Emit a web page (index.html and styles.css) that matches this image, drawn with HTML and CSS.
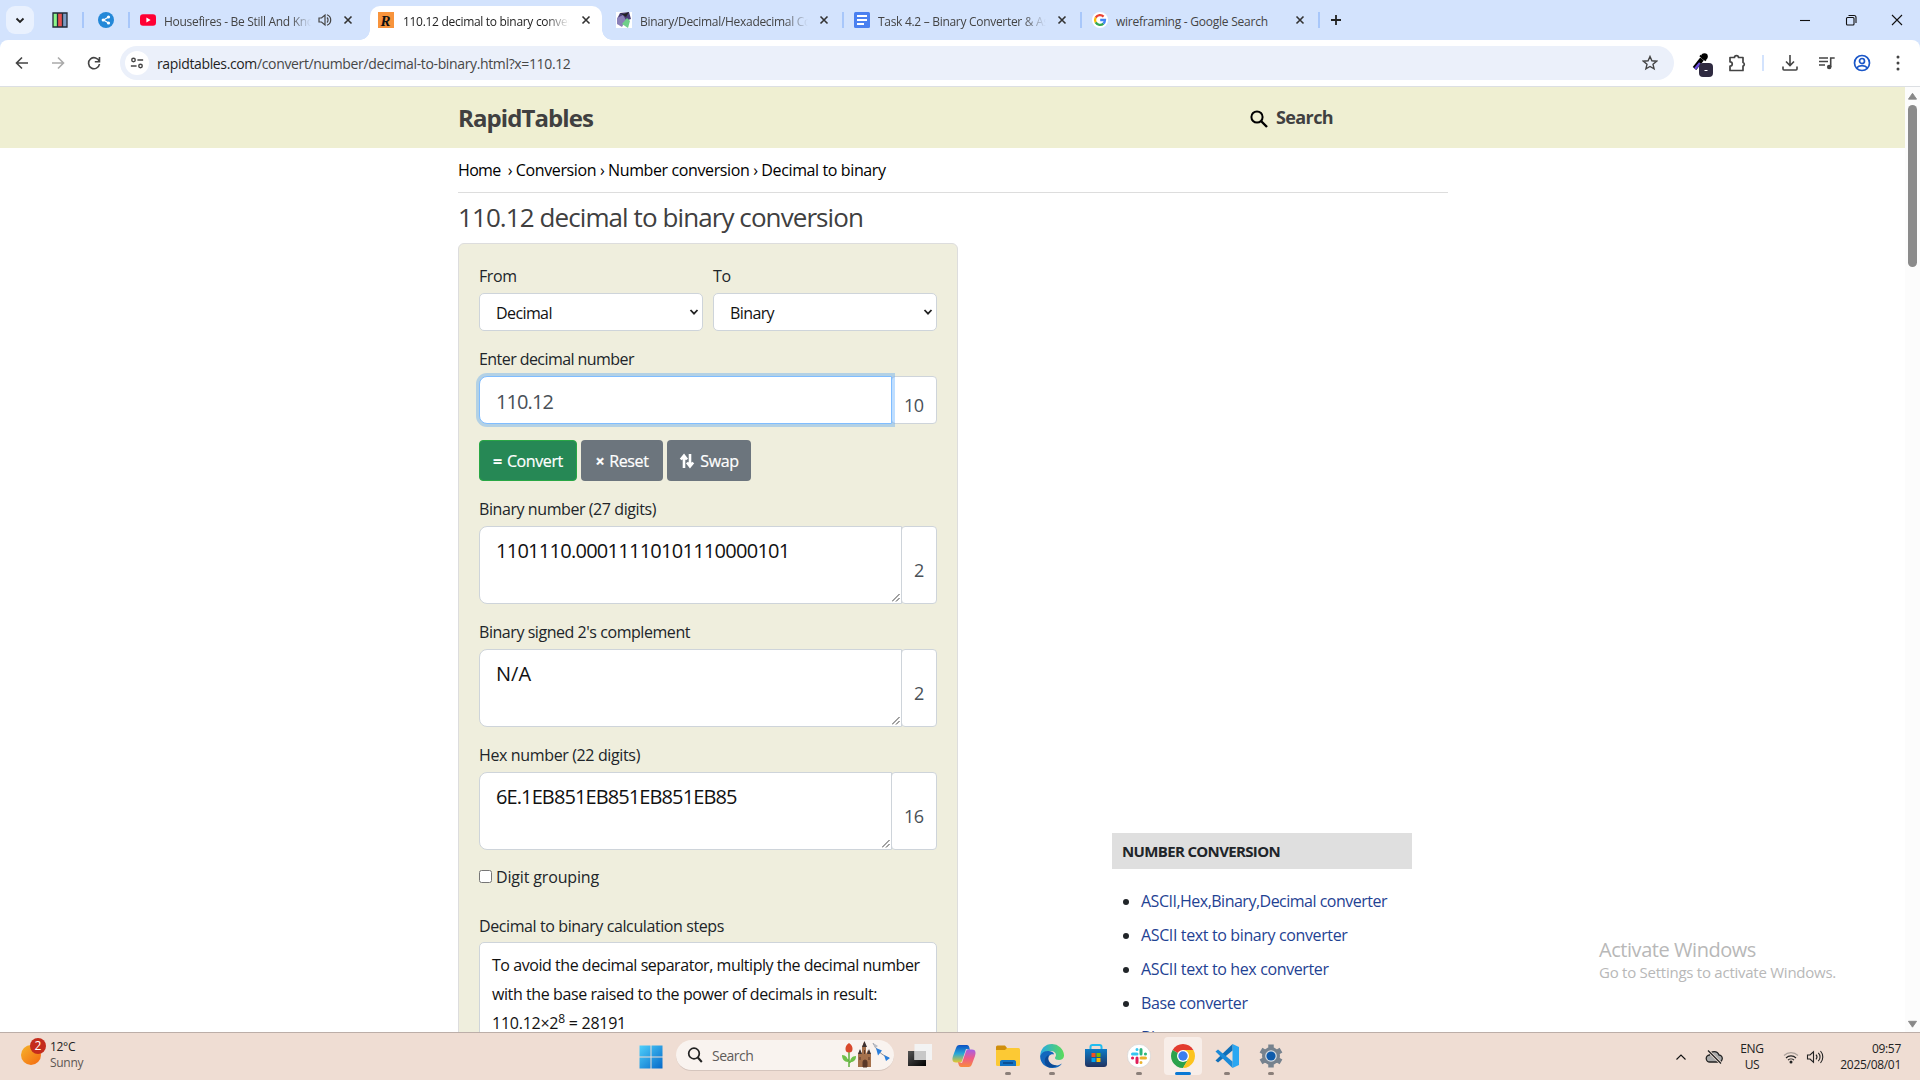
FILE: index.html
```html
<!DOCTYPE html>
<html lang="en">
<head>
<meta charset="utf-8">
<title>110.12 decimal to binary conversion</title>
<link rel="stylesheet" href="styles.css">
</head>
<body>
<div class="screen">
  <header class="tabstrip">
    <button class="tab-search"><svg viewBox="0 0 12 12" width="12" height="12"><path d="M2.500 4.500l3.500 3.500 3.500-3.500" class="s2"/></svg></button>
    <span class="pin pin-melon"><svg viewBox="0 0 16 16" width="16" height="16"><rect x="1" y="1" width="14" height="14" rx="1" fill="#e5524f"/><path d="M1 1h4.500v14H1z" fill="#8df58a"/><path d="M10.500 1H15v14h-4.500z" fill="#7d9cc4"/><path d="M1 1h14v14H1zM5.500 1v14M10.500 1v14" fill="none" stroke="#222b38" stroke-width="1.300"/></svg></span>
    <i class="sep sep-a"></i>
    <span class="pin pin-share"><svg viewBox="0 0 16 16" width="16" height="16"><circle cx="8" cy="8" r="8" fill="#2488d8"/><path d="M10.500 5L5.500 8l5 3" fill="none" stroke="#fff" stroke-width="1.200"/><circle cx="10.500" cy="5" r="1.600" fill="#fff"/><circle cx="5.200" cy="8" r="1.600" fill="#fff"/><circle cx="10.500" cy="11" r="1.600" fill="#fff"/></svg></span>
    <i class="sep sep-b"></i>
    <div class="tab tab-1">
      <svg viewBox="0 0 16 16" width="16" height="16"><rect y="2.300" width="16" height="11.400" rx="3" fill="#ff0033"/><path d="M6.400 5.500v5l4.200-2.500z" fill="#fff"/></svg>
      <span class="tab-title w147"><span class="t-a">Housefires - Be Still And Kno</span></span>
      <svg class="mute" viewBox="0 0 14 14" width="14" height="14"><path d="M1 5v4h2.500L7 12V2L3.500 5z" fill="none" stroke="#444" stroke-width="1.200"/><path d="M9 4.500a3.500 3.500 0 010 5M9 1.800a5.500 5.500 0 010 10.400" fill="none" stroke="#444" stroke-width="1.200"/></svg>
      <svg class="x" viewBox="0 0 10 10" width="10" height="10"><path d="M1.500 1.500l7 7M8.500 1.500l-7 7"/></svg>
    </div>
    <div class="tab tab-2 active">
      <svg viewBox="0 0 16 16" width="16" height="16"><rect width="16" height="16" fill="#f8943c"/><text x="2.500" y="13.500" class="r-logo">R</text></svg>
      <span class="tab-title w166"><span class="t-b">110.12 decimal to binary conver</span></span>
      <svg class="x" viewBox="0 0 10 10" width="10" height="10"><path d="M1.500 1.500l7 7M8.500 1.500l-7 7"/></svg>
    </div>
    <div class="tab tab-3">
      <svg viewBox="0 0 16 16" width="16" height="16"><rect width="16" height="16" fill="#fff"/><path d="M4 1l9-1 2 7-9 3-5-3z" fill="#4a3f78"/><path d="M1 6l6-3 3 5-4 7-5-3z" fill="#8b80b8"/><path d="M6 12l5-6 3 3-2 7z" fill="#6fcf8a"/><path d="M4 1l4 1 5-2-3 5z" fill="#222"/></svg>
      <span class="tab-title w168"><span class="t-c">Binary/Decimal/Hexadecimal Co</span></span>
      <svg class="x" viewBox="0 0 10 10" width="10" height="10"><path d="M1.500 1.500l7 7M8.500 1.500l-7 7"/></svg>
    </div>
    <i class="sep sep-c"></i>
    <div class="tab tab-4">
      <svg viewBox="0 0 16 16" width="16" height="16"><rect width="16" height="16" rx="1.500" fill="#4a80f0"/><path d="M3 4h10M3 8h10M3 12h7" stroke="#fff" stroke-width="1.800"/></svg>
      <span class="tab-title w168"><span class="t-d">Task 4.2 – Binary Converter &amp; As</span></span>
      <svg class="x" viewBox="0 0 10 10" width="10" height="10"><path d="M1.500 1.500l7 7M8.500 1.500l-7 7"/></svg>
    </div>
    <i class="sep sep-c"></i>
    <div class="tab tab-5">
      <svg viewBox="0 0 16 16" width="16" height="16"><circle cx="8" cy="8" r="8" fill="#fff"/><g fill="none" stroke-width="2.300"><path d="M11.600 4.600A5 5 0 003.700 5.600" stroke="#ea4335"/><path d="M3.700 5.500a5 5 0 000 5" stroke="#fbbc05"/><path d="M3.700 10.400a5 5 0 007.700 1.200" stroke="#34a853"/><path d="M11.300 11.700A5 5 0 0013 8H8.200" stroke="#4285f4"/></g></svg>
      <span class="tab-title w168 nofade"><span class="t-e">wireframing - Google Search</span></span>
      <svg class="x" viewBox="0 0 10 10" width="10" height="10"><path d="M1.500 1.500l7 7M8.500 1.500l-7 7"/></svg>
    </div>
    <i class="sep sep-c"></i>
    <svg class="plus" viewBox="0 0 12 12" width="12" height="12"><path d="M6 1v10M1 6h10" class="s2"/></svg>
    <div class="winctl">
      <svg viewBox="0 0 12 12" width="12" height="12"><path d="M1 6.500h10" class="s1"/></svg>
      <svg viewBox="0 0 12 12" width="12" height="12"><rect x="1.500" y="3.500" width="7.500" height="7.500" rx="1" class="s1"/><path d="M3.500 1.500h5.500a2 2 0 012 2V9" class="s1"/></svg>
      <svg viewBox="0 0 12 12" width="12" height="12"><path d="M1 1l10 10M11 1L1 11" class="s1"/></svg>
    </div>
  </header>

  <div class="toolbar">
    <div class="nav">
      <svg viewBox="0 0 16 16" width="16" height="16"><path d="M14 8H3M8 2.500L2.500 8 8 13.500" class="s3"/></svg>
      <svg class="dim" viewBox="0 0 16 16" width="16" height="16"><path d="M2 8h11M8 2.500L13.500 8 8 13.500" class="s3"/></svg>
      <svg viewBox="0 0 16 16" width="16" height="16"><path d="M13.300 6.500A5.500 5.500 0 1013.500 9M13.500 2v4.700H8.800" class="s3"/></svg>
    </div>
    <div class="omnibox">
      <span class="site-info"><svg viewBox="0 0 16 16" width="14" height="14"><circle cx="4" cy="4.500" r="2" class="s3"/><path d="M8.500 4.500H15M1 11.500h6.500" class="s3"/><circle cx="12" cy="11.500" r="2" class="s3"/></svg></span>
      <span class="url">rapidtables.com<span class="path">/convert/number/decimal-to-binary.html?x=110.12</span></span>
      <svg class="star" viewBox="0 0 16 16" width="16" height="16"><path d="M8 1.500l1.900 4.300 4.700.4-3.600 3.100 1.100 4.600L8 11.500l-4.100 2.400L5 9.300 1.400 6.200l4.700-.4z"/></svg>
    </div>
    <div class="ext">
      <svg viewBox="0 0 24 24" width="24" height="24"><path d="M4.500 15.500L12 6" stroke="#000" stroke-width="4.500"/><path d="M5 16l5-6" stroke="#6a4be0" stroke-width="2.500"/><path d="M10 2.500l6 5" stroke="#000" stroke-width="2"/><circle cx="14.500" cy="3.500" r="3.300"/><rect x="9" y="10" width="14" height="14" rx="4" fill="#2f2a40"/><path d="M14.500 17.500h3" stroke="#fff"/></svg>
      <svg viewBox="0 0 20 20" width="20" height="20"><path d="M3 4.500h4.500a2 1.800 0 014 0h4.500v5a1.900 1.900 0 010 3.600v4.400H3v-4.300c3 0 3-4.400 0-4.400z" fill="none" stroke="#444" stroke-width="1.700" stroke-linejoin="round"/></svg>
      <i></i>
      <svg viewBox="0 0 18 18" width="18" height="18"><path d="M9 1v10M5 7.500l4 4 4-4M2 12.500V15a1 1 0 001 1h12a1 1 0 001-1v-2.500" class="s3"/></svg>
      <svg viewBox="0 0 18 18" width="18" height="18"><path d="M1 4h9M1 7.500h9M1 11h6M12.700 13V4h4" class="s3"/><circle cx="11.200" cy="13" r="2.300" fill="#444"/></svg>
      <svg viewBox="0 0 18 18" width="18" height="18"><g fill="none" stroke="#1a56c8" stroke-width="1.700"><circle cx="9" cy="9" r="7.500"/><circle cx="9" cy="7" r="2.500"/><path d="M3.500 14c2.500-3.200 8.500-3.200 11 0"/></g></svg>
      <svg viewBox="0 0 4 18" width="4" height="18"><g fill="#444"><circle cx="2" cy="3" r="1.500"/><circle cx="2" cy="9" r="1.500"/><circle cx="2" cy="15" r="1.500"/></g></svg>
    </div>
  </div>

  <div class="viewport">
    <div class="page">
      <div class="site-header"><div class="wrap head-row">
        <span class="brand">RapidTables</span>
        <span class="site-search"><svg viewBox="0 0 18 18" width="18" height="18"><circle cx="7" cy="7" r="5.600" fill="none" stroke="#000" stroke-width="2"/><path d="M11 11l6 6" stroke="#000" stroke-width="2.400"/></svg><span class="ss">Search</span></span>
      </div></div>
      <div class="wrap">
        <nav class="crumbs"><span class="c1">Home</span><span class="c2">› Conversion › Number conversion › Decimal to binary</span></nav>
        <div class="cols">
          <main>
            <h1><span class="h1t">110.12 decimal to binary conversion</span></h1>
            <form class="calc">
              <div class="pair">
                <div><label>From</label><div class="select"><span class="sd">Decimal</span><svg viewBox="0 0 10 10" width="10" height="10"><path d="M1.500 3l3.500 3.700L8.500 3" class="s2"/></svg></div></div>
                <div><label>To</label><div class="select"><span class="sb">Binary</span><svg viewBox="0 0 10 10" width="10" height="10"><path d="M1.500 3l3.500 3.700L8.500 3" class="s2"/></svg></div></div>
              </div>
              <label><span class="l1">Enter decimal number</span></label>
              <div class="group entry"><div class="field focus"><span class="val v0">110.12</span></div><div class="addon wide">10</div></div>
              <div class="buttons">
                <span class="btn go"><b>=</b> <span class="bt">Convert</span></span><span class="btn b2"><b>×</b> <span>Reset</span></span><span class="btn b3"><svg viewBox="0 0 16 16" width="16" height="16"><path d="M5 15V4M1.800 6.500L5 2.500l3 4M11 1v11M8 9.500l3 4 3.200-4" fill="none" stroke="#fff" stroke-width="2.600"/></svg> <span>Swap</span></span>
              </div>
              <label><span class="l2">Binary number (27 digits)</span></label>
              <div class="group area"><div class="field"><span class="val v1">1101110.00011110101110000101</span><svg class="grip" viewBox="0 0 8 8" width="8" height="8"><path d="M0 7.500L7.500 0M4 7.500L7.500 4"/></svg></div><div class="addon">2</div></div>
              <label><span class="l3">Binary signed 2's complement</span></label>
              <div class="group area"><div class="field"><span class="val v2">N/A</span><svg class="grip" viewBox="0 0 8 8" width="8" height="8"><path d="M0 7.500L7.500 0M4 7.500L7.500 4"/></svg></div><div class="addon">2</div></div>
              <label><span class="l4">Hex number (22 digits)</span></label>
              <div class="group area"><div class="field"><span class="val v3">6E.1EB851EB851EB851EB85</span><svg class="grip" viewBox="0 0 8 8" width="8" height="8"><path d="M0 7.500L7.500 0M4 7.500L7.500 4"/></svg></div><div class="addon wide">16</div></div>
              <div class="check"><i></i><span class="l5">Digit grouping</span></div>
              <label class="steps-label"><span class="l6">Decimal to binary calculation steps</span></label>
              <div class="steps"><span class="p1">To avoid the decimal separator, multiply the decimal number</span><br><span class="p2">with the base raised to the power of decimals in result:</span><br><span class="p3">110.12×2<sup>8</sup> = 28191</span></div>
            </form>
          </main>
          <aside>
            <h2><span class="h2t">NUMBER CONVERSION</span></h2>
            <ul>
              <li><a class="a1">ASCII,Hex,Binary,Decimal converter</a></li>
              <li><a class="a2">ASCII text to binary converter</a></li>
              <li><a class="a3">ASCII text to hex converter</a></li>
              <li><a class="a4">Base converter</a></li>
              <li><a class="a4">Binary converter</a></li>
            </ul>
          </aside>
        </div>
      </div>
    </div>
    <div class="scrollbar">
      <svg viewBox="0 0 10 8" width="9" height="8"><path d="M5 1L9.500 7.500H.5z" fill="#888" stroke="#888" stroke-linejoin="round"/></svg>
      <i></i>
      <svg class="down" viewBox="0 0 10 8" width="9" height="8"><path d="M5 7.500L.5 1h9z" fill="#888" stroke="#888" stroke-linejoin="round"/></svg>
    </div>
    <div class="watermark"><span class="wm1">Activate Windows</span><span class="wm2">Go to Settings to activate Windows.</span></div>
  </div>

  <footer class="taskbar">
    <div class="weather">
      <svg viewBox="0 0 30 32" width="30" height="32"><defs><linearGradient id="sun" x1="0" y1="0" x2="1" y2="1"><stop offset="0" stop-color="#f5b52c"/><stop offset="1" stop-color="#f4670f"/></linearGradient></defs><circle cx="11" cy="19" r="10" fill="url(#sun)"/><circle cx="18" cy="10" r="8" fill="#c42b1c"/><text x="18" y="14.300" class="badge">2</text></svg>
      <div><span class="k">12°C</span><span class="k soft">Sunny</span></div>
    </div>
    <div class="apps">
      <svg class="win" viewBox="0 0 24 24" width="24" height="24"><defs><linearGradient id="w" x1="0" y1="0" x2="1" y2="1"><stop offset="0" stop-color="#4fd0fb"/><stop offset="1" stop-color="#0669c9"/></linearGradient></defs><path fill="url(#w)" d="M.5.500h11v11H.5zM12.500.500h11v11h-11zM.5 12.500h11v11H.5zM12.500 12.500h11v11h-11z"/></svg>
      <div class="search">
        <svg viewBox="0 0 16 16" width="16" height="16"><circle cx="7" cy="6.500" r="5.300" fill="none" stroke="#222" stroke-width="1.700"/><path d="M10.800 10.500l4 4.500" stroke="#222" stroke-width="2"/></svg>
        <span class="stext">Search</span>
        <svg class="art" viewBox="0 0 50 28" width="50" height="28"><path d="M8 10v16M8 20l-5-3M8 22l5-4" stroke="#5fae3c" stroke-width="1.500"/><path d="M1 14c4 0 6 3 6 7-4 0-6-3-6-7zM15 15c-4 0-6 3-6 6 4 0 6-2 6-6z" fill="#6fc04a"/><path d="M8 2c3 2 3.500 4 3.500 6A3.500 3.500 0 018 11.500 3.500 3.500 0 014.500 8C4.500 6 5 4 8 2z" fill="#d8492c"/><path d="M17 26V13l2-4 2 4V6l2-5 2 5v7l2-4 3 4v13z" fill="#a5714c"/><path d="M17 13l2-5 2 5zM21 6l2.500-6L26 6zM26 13l2-5 2 5z" fill="#3d3232"/><path d="M22 26v-5a2 2 0 014 0v5zM19 16v3M28 16v3M23.500 9v4" fill="#5a3828" stroke="#5a3828"/><path d="M32 2c4 8 9 12 16 15" fill="none" stroke="#8b8f98"/><path d="M32 2l5 3-3 2z" fill="#b8bcc4"/><path d="M35 7l6 2.500-4 5zM43 14l6 3-4 3z" fill="#2a7fdc"/></svg>
      </div>
      <span class="app"><svg viewBox="0 0 24 24" width="24" height="24"><defs><linearGradient id="tv" x1="0" y1="0" x2="1" y2="1"><stop offset="0" stop-color="#555"/><stop offset="1" stop-color="#000"/></linearGradient></defs><path fill="url(#tv)" d="M0 7h18v15H0z"/><path fill="#f3f3f3" d="M6.500 0H24v16H6.500z"/><path fill="#c8c8c8" d="M6.500 7H18v9H6.500z"/></svg></span>
      <span class="app"><svg viewBox="0 0 24 24" width="24" height="24"><defs><linearGradient id="ca" x1="0" y1="0" x2="0" y2="1"><stop offset="0" stop-color="#0b50c4"/><stop offset=".5" stop-color="#28a8d8"/><stop offset="1" stop-color="#e8c82a"/></linearGradient><linearGradient id="cb" x1="0" y1="0" x2="0" y2="1"><stop offset="0" stop-color="#a45ee8"/><stop offset=".5" stop-color="#ee5b88"/><stop offset="1" stop-color="#f98a3c"/></linearGradient></defs><path fill="url(#ca)" d="M7.500 1H15c2 0 2.500 3 3 5l-4-1-4 12c-.5 1-1.500 1.500-2.500 1.500H4C0 18.500 0 15 1 12L4 4c.7-2 1.500-3 3.500-3z"/><path fill="url(#cb)" d="M16.500 23H9c-2 0-2.500-3-3-5l4 1L14 7c.5-1 1.500-1.500 2.500-1.500H20c4 0 4 3.500 3 6.500l-3 8c-.7 2-1.500 3-3.500 3z"/></svg></span>
      <span class="app run"><svg viewBox="0 0 24 24" width="24" height="24"><path d="M0 3a1.500 1.500 0 011.500-1.500H9L11 4v3H0z" fill="#d08e0c"/><path d="M0 6h9l2-2h11.500A1.500 1.500 0 0124 5.500v15a1.500 1.500 0 01-1.500 1.500h-21A1.500 1.500 0 010 20.500z" fill="#fcc934"/><path d="M4 22v-4.500A2 2 0 016 16h12a2 2 0 012 1.500V22z" fill="#1272c4"/><path d="M7 18h10v2H7z" fill="#0b4f94"/></svg></span>
      <span class="app run"><svg viewBox="0 0 24 24" width="24" height="24"><defs><linearGradient id="ea" x1="0" y1="0" x2="1" y2="0"><stop offset="0" stop-color="#27a8e6"/><stop offset="1" stop-color="#5bdc58"/></linearGradient></defs><path d="M12 0a12 12 0 0112 11c.3 3-2 5-5 5-2.500 0-4-1-4-2 0-1 1-1.500 1-3 0-2.500-2.500-4-5.500-4C6 7 2 9 .2 13 0 5 5 0 12 0z" fill="url(#ea)"/><path d="M.2 12C1.500 8.500 5 6.500 9 7c3 .3 5 2 5 3.500-2-1-6 .5-6 5s5 7.500 11 5.500l3-1.500C20 22.500 16.500 24 12.500 24 5 24-.3 18.500.2 12z" fill="#1267bd"/><path d="M9 11c-2 4 0 10 8 10.500-3 2.300-7 2.500-9 1.500-5-3-4-11 1-12z" fill="#0c4a97"/></svg></span>
      <span class="app"><svg viewBox="0 0 24 24" width="24" height="24"><defs><linearGradient id="st" x1="0" y1="0" x2="0" y2="1"><stop offset="0" stop-color="#0d7cc8"/><stop offset="1" stop-color="#213260"/></linearGradient></defs><path d="M6.500 7V3a2 2 0 012-2h7a2 2 0 012 2v4" fill="none" stroke="#22bdf0" stroke-width="2"/><path d="M1 5h22v15a3 3 0 01-3 3H4a3 3 0 01-3-3z" fill="url(#st)"/><path d="M7.500 9h4v4h-4z" fill="#f25022"/><path d="M12.500 9h4v4h-4z" fill="#7fba00"/><path d="M7.500 14h4v4h-4z" fill="#00a4ef"/><path d="M12.500 14h4v4h-4z" fill="#ffb900"/></svg></span>
      <span class="app run"><svg viewBox="0 0 24 24" width="24" height="24"><circle cx="12" cy="12" r="11.700" fill="#fff" stroke="#ccc" stroke-width=".6"/><g stroke-width="3" stroke-linecap="round" fill="none"><path d="M10 5.500v.1M5.500 10H10" stroke="#36c5f0"/><path d="M14 5.500V10M18.500 10h-.1" stroke="#2eb67d"/><path d="M14 14h4.500M14 18.500v-.1" stroke="#ecb22e"/><path d="M10 14v4.500M5.500 14h.1" stroke="#e01e5a"/></g></svg></span>
      <span class="app on"><svg viewBox="0 0 24 24" width="24" height="24"><path d="M12 12L1.610 6A12 12 0 0122.390 6z" fill="#e33b2e"/><path d="M12 12L1.610 6A12 12 0 0012 24l5.500-9z" fill="#2ba24c"/><path d="M12 12l5.200 3L12 24A12 12 0 0022.390 6H12z" fill="#fcc31e"/><circle cx="12" cy="12" r="6" fill="#fff"/><circle cx="12" cy="12" r="4.700" fill="#3b7ded"/></svg></span>
      <span class="app run"><svg viewBox="0 0 24 24" width="24" height="24"><path d="M17.500 0L24 3v18l-6.500 3z" fill="#2aa7f2"/><path d="M17.500 6.500L3 18.500.5 16.500 17.500 0z" fill="#0f6fb8"/><path d="M17.500 17.500L3 5.500.5 7.500 17.500 24z" fill="#1a8ad8"/></svg></span>
      <span class="app run"><svg viewBox="0 0 24 24" width="24" height="24"><circle cx="12" cy="12" r="9" fill="#76828e"/><g stroke="#76828e" stroke-width="5.500"><path d="M12 .5v23M2 6.200l20 11.600M2 17.800L22 6.200"/></g><circle cx="12" cy="12" r="5.800" fill="#d8dee4"/><circle cx="12" cy="12" r="4.600" fill="#0f5bab"/></svg></span>
    </div>
    <div class="tray">
      <svg viewBox="0 0 12 8" width="12" height="8"><path d="M1.500 6.500L6 2l4.500 4.500" class="s1"/></svg>
      <svg class="cloud" viewBox="0 0 18 16" width="18" height="16"><path d="M5 13a3.500 3.500 0 01-.5-7A5 5 0 0114 6a3.500 3.500 0 01-.5 7z" fill="#a9a9a9" stroke="#222" stroke-width="1.300"/><path d="M3 1.500l13 13" stroke="#efded4" stroke-width="3"/><path d="M3 1.500l13 13" stroke="#222" stroke-width="1.300"/></svg>
      <div class="lang"><span class="k">ENG</span><span class="k">US</span></div>
      <svg class="wifi" viewBox="0 0 16 14" width="16" height="14"><g fill="none" stroke="#222" stroke-width="1.100"><path d="M1 5.500a10 10 0 0114 0" stroke="#aaa09a"/><path d="M3 8a7 7 0 0110 0M5 10.200a4.300 4.300 0 016 0"/></g><circle cx="8" cy="12" r="1.500" fill="#222"/></svg>
      <svg class="vol" viewBox="0 0 18 14" width="18" height="14"><g fill="none" stroke="#222" stroke-width="1.100"><path d="M1.500 5v4h2.500l3.500 3.200V1.800L4 5z"/><path d="M10 4.700a3.500 3.500 0 010 4.600M12.300 2.800a6 6 0 010 8.400M14.500 1a9 9 0 010 12"/></g></svg>
      <div class="clock"><span class="k">09:57</span><span class="k dt">2025/08/01</span></div>
    </div>
  </footer>
</div>
</body>
</html>
```
FILE: styles.css
```css
*{box-sizing:border-box}
body{margin:0;font-family:"Open Sans","Noto Sans",sans-serif;background:#fff;color:#212529}
svg{display:block;flex:none}
.screen{width:1920px;height:1080px;overflow:hidden;display:flex;flex-direction:column}
.s1{fill:none;stroke:#111;stroke-width:1.1}
.s2{fill:none;stroke:#222;stroke-width:1.8}
.s3{fill:none;stroke:#444;stroke-width:1.6}

/* tab strip */
.tabstrip{height:40px;flex:none;background:#d3e3fd;display:flex;align-items:center;position:relative}
.tab-search{margin:0 0 0 6px;width:28px;height:28px;border:0;padding:0;border-radius:9px;background:#e9f1fe;display:flex;align-items:center;justify-content:center}
.pin-melon{margin-left:18px}
.pin-share{margin-left:14px}
.sep{width:2px;height:16px;background:#a8c7fa;flex:none}
.sep-a{margin-left:14px}
.sep-b{margin-left:14px}
.tab{height:34px;margin-top:6px;padding-bottom:6px;display:flex;align-items:center;font-size:12px;color:#444;flex:none}
.tab-title{margin-left:8px;overflow:hidden;white-space:nowrap;flex:none;letter-spacing:-.3px;position:relative;top:1px;-webkit-mask-image:linear-gradient(90deg,#000 86%,transparent)}
.nofade{-webkit-mask-image:none;letter-spacing:-.24px}
.w147{width:147px}.w166{width:166px}.w168{width:168px}
.x{margin-left:11px}
.x path{stroke:#333;stroke-width:1.6}
.mute{margin-left:7px}
.tab-1{width:230px;padding-left:10px}
.tab-2{width:232px;padding-left:8px;margin-left:10px;color:#222}
.tab-2 .tab-title{margin-left:9px}
.tab-2 .x{margin-left:12px}
.tab.active{background:#fff;border-radius:10px 10px 0 0;position:relative}
.active::before,.active::after{content:"";position:absolute;bottom:0;width:10px;height:10px}
.active::before{left:-10px;background:radial-gradient(circle at 0 0,transparent 9.5px,#fff 10px)}
.active::after{right:-10px;background:radial-gradient(circle at 100% 0,transparent 9.5px,#fff 10px)}
.tab-3{width:240px;padding-left:14px}
.tab-4,.tab-5{width:236px;padding-left:10px}
.r-logo{font:italic bold 15px "Liberation Serif",serif;fill:#111}
.plus{margin-left:10px}
.winctl{margin-left:auto;display:flex;gap:34px;padding-right:17px}

/* toolbar */
.toolbar{height:47px;flex:none;background:#fff;border-bottom:1px solid #dcdfe3;border-radius:8px 8px 0 0;box-shadow:0 -8px 0 #d3e3fd;display:flex;align-items:center;padding-left:14px}
.tabstrip{z-index:1}
.nav{display:flex;gap:20px;width:106px}
.dim{opacity:.45}
.omnibox{width:1554px;height:34px;border-radius:17px;background:#ebf0fa;display:flex;align-items:center;padding:0 16px 0 5px}
.site-info{width:24px;height:24px;border-radius:12px;background:#fff;display:flex;align-items:center;justify-content:center}
.url{margin-left:8px;font-size:14px;color:#1f1f1f;white-space:nowrap;letter-spacing:-.358px}
.path{color:#474747}
.star{margin-left:auto;fill:none;stroke:#444;stroke-width:1.4}
.ext{display:flex;align-items:center;padding-left:16px}
.ext svg:nth-child(1){margin-top:3px}
.ext svg:nth-child(2){margin-left:13px}
.ext i{width:2px;height:16px;background:#d3e3fd;margin:0 17px 0 15px}
.ext svg:nth-child(5){margin-left:19px}
.ext svg:nth-child(6){margin-left:17px}
.ext svg:nth-child(7){margin-left:25px}

/* browser viewport */
.viewport{height:945px;flex:none;display:flex;overflow:hidden;position:relative}
.page{flex:1}
.scrollbar{width:15px;background:#fcfcfc;display:flex;flex-direction:column;align-items:center;padding:5px 0 4px}
.scrollbar i{width:9px;height:162px;border-radius:5px;background:#8b8b8b;margin-top:5px}
.scrollbar .down{margin-top:auto}
.site-header{height:61px;background:#efefd2}
.wrap{width:990px;margin-left:458px}
.head-row{height:61px;display:flex;align-items:center;padding-top:1px}
.brand{font-size:24px;font-weight:700;color:#404040;line-height:30px;width:792px;letter-spacing:-.92px}
.brand,.ss,.c1,.c2{white-space:nowrap}
.site-search{display:flex;align-items:center;font-size:18px;font-weight:700;color:#404040;line-height:24px;padding-top:1px}
.ss{margin-left:8px;position:relative;top:-2px;letter-spacing:-.6px}
.crumbs{height:45px;border-bottom:1px solid #ddd;color:#000;font-size:16px;line-height:45px;display:flex}
.c1{letter-spacing:-.65px}
.c2{margin-left:7px;letter-spacing:-.384px}
.cols{display:flex}
main{width:500px}
h1{margin:0;height:50px;font-size:26px;line-height:49px;font-weight:400;color:#404040;white-space:nowrap;letter-spacing:-.914px}
.calc{border:1px solid #ddd;border-radius:6px;background:#efeedd;padding:19px 20px 0;height:860px}
label{display:block;height:30px;line-height:24px;font-size:16px;padding-top:1px;letter-spacing:-.42px}
.pair{display:grid;grid-template-columns:224px 224px;gap:10px;margin-bottom:15px}
.select{height:38px;background:#fff;border:1px solid #ced4da;border-radius:5px;display:flex;align-items:center;justify-content:space-between;padding:2px 3px 0 16px;font-size:16px;line-height:24px;color:#111;letter-spacing:-.6px}
.select svg{margin-top:-2px}
.l1{letter-spacing:-.561px}
.l3{letter-spacing:-.448px}
.l4{letter-spacing:-.364px}
.l5{letter-spacing:-.16px}
.l6{letter-spacing:-.4px}
.group{display:flex;margin-bottom:15px}
.entry{height:48px;margin-bottom:16px}
.area{height:78px}
.field{flex:1;background:#fff;border:1px solid #ced4da;border-radius:8px 0 0 8px;padding:10px 0 0 16px;font-size:20px;line-height:28px;color:#111;position:relative}
.entry .field{padding-top:11px}
.focus{border-color:#80bdff;box-shadow:0 0 0 3px rgba(0,123,255,.25);color:#495057;z-index:1}
.v0{letter-spacing:-.906px}
.v1{letter-spacing:-.733px}
.v3{letter-spacing:-.899px}
.addon{width:36px;margin-left:-1px;background:#fff;border:1px solid #ced4da;border-radius:4px;display:flex;align-items:center;padding:10px 0 0 12px;font-size:18px;line-height:27px;color:#495057;letter-spacing:-.6px}
.addon.wide{width:46px}
.entry .addon{padding-top:11px}
.grip{position:absolute;right:1px;bottom:1px;fill:none;stroke:#444}
.buttons{display:flex;gap:4px;margin-bottom:15px}
.btn{height:41px;border-radius:4px;background:#6c757d;color:#fff;font-size:16px;display:flex;align-items:center;justify-content:center;gap:5px;width:82px;padding-top:1px;letter-spacing:-.39px;-webkit-text-stroke:.2px #fff}
.go{width:98px;background:#268855;border:1px solid #28a745}
.b3{width:84px}
.check{height:24px;line-height:25px;display:flex;margin-bottom:24px}
.check i{width:13px;height:13px;border:1px solid #767676;border-radius:2.500px;background:#fff;margin:5px 4px 0 0}
.steps-label{height:29px}
.steps{background:#fff;border:1px solid #ced4da;border-radius:5px;height:200px;padding:8px 0 0 12px;font-size:16px;line-height:28.8px;color:#111;white-space:nowrap}
.p1{letter-spacing:-.452px}
.p2{letter-spacing:-.41px}
.p3{letter-spacing:-.255px}
sup{font-size:12px;line-height:0}
aside{margin-left:154px;width:300px;padding-top:640px}
h2{margin:0;height:36px;background:#dfdfdf;padding-left:10px;font-size:15px;line-height:36px;white-space:nowrap;letter-spacing:-.651px}
ul{margin:15px 0 0;padding:0 0 0 29px;font-size:16px;line-height:34px;white-space:nowrap}
a{color:#1f4293;letter-spacing:-.37px}
.a1{letter-spacing:-.505px}
.watermark{position:absolute;left:1599px;top:850px;color:#b8b8b8;display:flex;flex-direction:column;white-space:nowrap}
.wm1{font-size:20px;line-height:26px;letter-spacing:-.45px}
.wm2{font-size:15px;line-height:20px;letter-spacing:-.251px;margin-top:-1px}

/* taskbar */
.taskbar{flex:1;background:#efddd3;border-top:1px solid #bcaea8;display:flex;position:relative}
.k{display:block;font-size:12px;line-height:16px;color:#222;letter-spacing:-.3px;white-space:nowrap}
.weather{display:flex;padding:6px 0 0 20px;width:639px}
.weather svg{margin-top:-3px}
.badge{font-size:12px;fill:#fff;text-anchor:middle}
.soft{color:#5d5652}
.apps{display:flex;padding-top:4px;height:47px}
.win{margin-top:8px}
.search{width:218px;height:31px;margin:3px 7px 0 13px;border-radius:16px;background:#f9f3ef;border-bottom:1px solid #d5c5bd;display:flex;align-items:center;padding:0 3px 0 11px;font-size:14px;color:#5f5b59}
.stext{margin-left:9px;letter-spacing:-.5px}
.art{margin-left:auto}
.app{width:38px;margin-right:5.900px;height:38px;border-radius:4px;padding:7px 7px 0;position:relative;flex:none}
.run::after,.on::after{content:"";position:absolute;left:16px;bottom:0;width:6px;height:3px;border-radius:2px;background:#8b7f79}
.on{background:#f8eee9}
.on::after{left:11px;width:16px;background:#0a78d4}
.tray{margin-left:auto;display:flex;align-items:center;padding-right:19px}
.cloud{margin-left:18px}
.lang{width:26px;text-align:center;margin-left:16px}
.wifi{margin-left:18px}
.vol{margin-left:7px}
.clock{width:62px;text-align:right;margin-left:15px}
```
